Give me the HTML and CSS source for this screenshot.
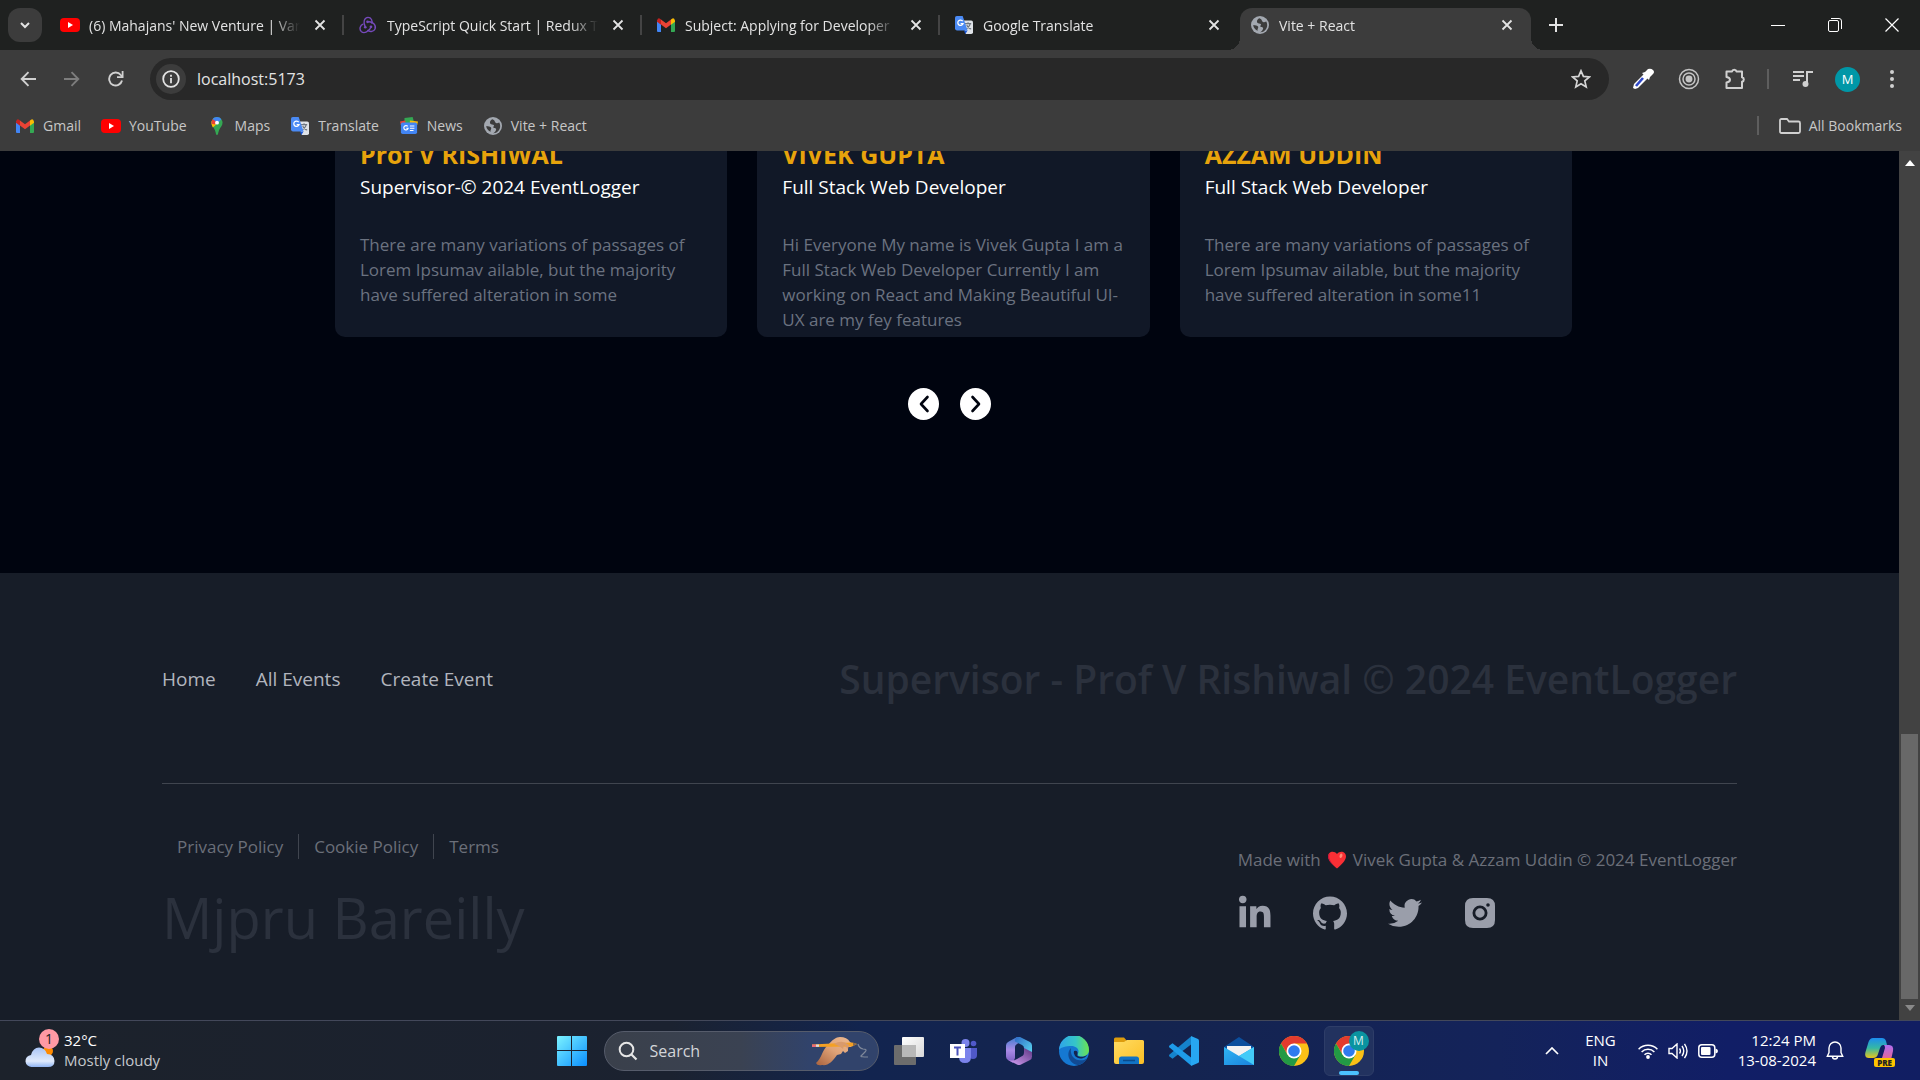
FILE: index.html
```html
<!DOCTYPE html>
<html lang="en">
<head>
<meta charset="utf-8">
<meta name="viewport" content="width=device-width, initial-scale=1">
<title>Vite + React</title>
<link rel="stylesheet" href="styles.css">
</head>
<body>
<svg class="sprite" width="0" height="0" aria-hidden="true">
  <defs>
    <linearGradient id="g-win" x1="0" y1="0" x2="1" y2="1"><stop offset="0" stop-color="#7cf3ff"/><stop offset="1" stop-color="#0a8fff"/></linearGradient>
    <linearGradient id="g-cloud" x1="0" y1="0" x2="0" y2="1"><stop offset="0" stop-color="#a9c4f5"/><stop offset=".7" stop-color="#dfeafc"/><stop offset="1" stop-color="#8fb4f2"/></linearGradient>
    <linearGradient id="g-skin" x1="0" y1="1" x2="1" y2="0"><stop offset="0" stop-color="#a8623e"/><stop offset=".5" stop-color="#e0a377"/><stop offset="1" stop-color="#edba92"/></linearGradient>
    <linearGradient id="g-o1" x1="0" y1="0" x2="1" y2="1"><stop offset="0" stop-color="#2d66c4"/><stop offset="1" stop-color="#5fe3f5"/></linearGradient>
    <linearGradient id="g-o2" x1="0" y1="0" x2="0" y2="1"><stop offset="0" stop-color="#3f7ccf"/><stop offset=".5" stop-color="#a98be6"/><stop offset="1" stop-color="#7a5bc0"/></linearGradient>
    <linearGradient id="g-o3" x1="0" y1="1" x2="1" y2="0"><stop offset="0" stop-color="#d9a4f7"/><stop offset="1" stop-color="#5b3583"/></linearGradient>
    <linearGradient id="g-edge" x1="0" y1="0" x2="1" y2="0"><stop offset="0" stop-color="#2fa4ea"/><stop offset=".55" stop-color="#35c5c8"/><stop offset="1" stop-color="#6be34f"/></linearGradient>
    <linearGradient id="g-folder" x1="0" y1="0" x2="1" y2="1"><stop offset="0" stop-color="#ffdc63"/><stop offset="1" stop-color="#fcbf24"/></linearGradient>
    <linearGradient id="g-mail" x1="0" y1="0" x2="1" y2="1"><stop offset="0" stop-color="#2fb4f3"/><stop offset="1" stop-color="#1a82dc"/></linearGradient>
    <linearGradient id="g-cop1" x1="0" y1="0" x2="0" y2="1"><stop offset="0" stop-color="#1c8cf0"/><stop offset=".5" stop-color="#35b8a4"/><stop offset="1" stop-color="#e8c61c"/></linearGradient>
    <linearGradient id="g-cop2" x1="0" y1="0" x2="0" y2="1"><stop offset="0" stop-color="#b06cf0"/><stop offset="1" stop-color="#f4667c"/></linearGradient>
    <linearGradient id="g-tv" x1="0" y1="0" x2="1" y2="1"><stop offset="0" stop-color="#fff"/><stop offset="1" stop-color="#d8d8d8"/></linearGradient>
  </defs>
  <symbol id="i-yt" viewBox="0 0 20 16"><rect y="1" width="20" height="14" rx="4" fill="#f00"/><path d="M8 5l5 3-5 3z" fill="#fff"/></symbol>
  <symbol id="i-gmail" viewBox="0 0 20 16"><path d="M1 3v11q0 1 1 1h3V7z" fill="#4285f4"/><path d="M19 3v11q0 1-1 1h-3V7z" fill="#34a853"/><path d="M5 2.500v5l5 3.800 5-3.800v-5l-5 3.800z" fill="#ea4335"/><path d="M1 3.500v1.300l4 3V2.500l-1-.8Q2 .5 1 3.500z" fill="#c5221f"/><path d="M19 3.500v1.300l-4 3V2.500l1-.8Q18 .5 19 3.500z" fill="#fbbc04"/></symbol>
  <symbol id="i-tr" viewBox="0 0 20 20"><path d="M8 5h10q2 0 2 2v11q0 2-2 2h-6z" fill="#dfe3e8"/><path d="M11 8.500h7M14.500 7v1.500M17 8.500q-1 4-5 6M13 10q2 4 5 4.500" stroke="#6f7780" stroke-width="1.200" fill="none"/><path d="M10 16h4l-2.500 4z" fill="#1a56d6"/><path d="M2 0h6.500l5.500 16H2q-2 0-2-2V2q0-2 2-2z" fill="#4a8af4"/><path d="M8.600 5.800A3 3 0 1 0 9 8.400H6.300" stroke="#fff" stroke-width="1.400" fill="none"/></symbol>
  <symbol id="i-redux" viewBox="0 0 20 20"><g fill="none" stroke="#764abc" stroke-width="1.500"><path d="M7 12C4 7 6 1.500 10 1.500c3.600 0 5.500 4 4 7"/><path d="M9.500 6.500c6-1 10 4 8.300 8-1.500 3.500-6.500 3.500-8.300 1"/><path d="M13.500 12c-2 5.500-8 8-11 5.200C-.2 14.500 1.500 10 4.500 9"/></g><circle cx="9.500" cy="6.500" r="1.500" fill="#764abc"/><circle cx="7" cy="12.500" r="1.500" fill="#764abc"/><circle cx="13.300" cy="12" r="1.500" fill="#764abc"/></symbol>
  <symbol id="i-globe" viewBox="0 0 20 20"><circle cx="10" cy="10" r="10" fill="#a3a8b0"/><path d="M9 2.500C7 4 6 5.500 7 7.500c1 1 3 .5 4 1.500.5 1-1 2-.5 3 1 1 3 0 3 1.500 0 2-2 4-3.500 4.500 4.500.3 8-3.500 8-8 0-1.500-.4-2.800-1-4-1.500.3-3 1.500-4 .5S12 3 9 2.500z" fill="#3c3c3c"/><path d="M2.500 10c2 .2 5 .5 5.500 2s-1.500 3-.5 4.500C5 15.500 2.500 13 2.500 10z" fill="#3c3c3c"/></symbol>
  <symbol id="i-maps" viewBox="0 0 16 24"><path d="M8 0a7.500 7.500 0 0 0-7 10c1 3 4.500 6 5.300 11 .3 2 .7 3 1.700 3s1.400-1 1.700-3C10.500 16 14 13 15 10A7.500 7.500 0 0 0 8 0z" fill="#34a853"/><path d="M1 5l6 5-4.500 4C1 11.500 0 8 1 5z" fill="#fbbc04"/><path d="M2.300 2.800A8 8 0 0 0 .6 9l4.800 1 3-4z" fill="#ea4335"/><path d="M2.300 2.800C5-.7 11-.8 13.700 3L9.500 8 6 5.500z" fill="#4285f4"/><circle cx="8" cy="7.500" r="2.600" fill="#fff"/></symbol>
  <symbol id="i-news" viewBox="0 0 20 20"><path d="M5 1l9-1 2 7H5z" fill="#34a853"/><path d="M0 5l6-1v5H1z" fill="#ea4335"/><path d="M20 5l-9-1v5h8z" fill="#fbbc04"/><rect x="1" y="6" width="18" height="13" rx="2" fill="#4285f4"/><path d="M8.600 10.500a2.400 2.400 0 1 0 .4 2H7M11 10h5M11 12.500h5M11 15h4" stroke="#fff" stroke-width="1.300" fill="none"/></symbol>
  <symbol id="i-x" viewBox="0 0 12 12"><path d="M1.500 1.500l9 9M10.500 1.500l-9 9" stroke="currentColor" stroke-width="1.800"/></symbol>
  <symbol id="i-chrome" viewBox="0 0 30 30"><circle cx="15" cy="15" r="15" fill="#fbc116"/><path d="M2 7.500A15 15 0 0 1 28 7.500H15L9 19z" fill="#e33b2e"/><path d="M2 7.500A15 15 0 0 0 15 30l6.500-11.300L8.500 18.700z" fill="#229a45"/><circle cx="15" cy="15" r="7.500" fill="#fff"/><circle cx="15" cy="15" r="5.800" fill="#2f7bee"/></symbol>
</svg>

<header class="browser">
  <div class="tabstrip">
    <button class="tab-search" aria-label="Search tabs"><svg width="12" height="12" viewBox="0 0 12 12"><path d="M2 4l4 4 4-4" fill="none" stroke="#e3e3e3" stroke-width="2"/></svg></button>
    <div class="tab"><svg class="fav"><use href="#i-yt"/></svg><span class="tab-title">(6) Mahajans' New Venture | Var</span><button class="tab-close" aria-label="Close tab"><svg width="12" height="12"><use href="#i-x"/></svg></button></div>
    <div class="tab"><svg class="fav"><use href="#i-redux"/></svg><span class="tab-title">TypeScript Quick Start | Redux To</span><button class="tab-close" aria-label="Close tab"><svg width="12" height="12"><use href="#i-x"/></svg></button></div>
    <div class="tab"><svg class="fav"><use href="#i-gmail"/></svg><span class="tab-title">Subject: Applying for Developer</span><button class="tab-close" aria-label="Close tab"><svg width="12" height="12"><use href="#i-x"/></svg></button></div>
    <div class="tab tab-last"><svg class="fav"><use href="#i-tr"/></svg><span class="tab-title">Google Translate</span><button class="tab-close" aria-label="Close tab"><svg width="12" height="12"><use href="#i-x"/></svg></button></div>
    <div class="tab tab-active"><svg class="fav"><use href="#i-globe"/></svg><span class="tab-title">Vite + React</span><button class="tab-close" aria-label="Close tab"><svg width="12" height="12"><use href="#i-x"/></svg></button></div>
    <button class="new-tab" aria-label="New tab"><svg width="14" height="14" viewBox="0 0 14 14"><path d="M7 0v14M0 7h14" stroke="#e3e3e3" stroke-width="2"/></svg></button>
    <div class="win-buttons">
      <button aria-label="Minimize"><svg width="14" height="14" viewBox="0 0 14 14"><path d="M0 7.500h14" stroke="#fff"/></svg></button>
      <button aria-label="Restore"><svg width="14" height="14" viewBox="0 0 14 14"><rect x=".5" y="2.500" width="10" height="11" rx="1.500" fill="none" stroke="#fff"/><path d="M3 .5h8q2.500 0 2.500 2.500v8" fill="none" stroke="#fff"/></svg></button>
      <button aria-label="Close"><svg width="14" height="14" viewBox="0 0 14 14"><path d="M.5.500l13 13M13.500.500l-13 13" stroke="#fff" stroke-width="1.200"/></svg></button>
    </div>
  </div>

  <div class="toolbar">
    <div class="nav-buttons">
      <button aria-label="Back"><svg width="16" height="16" viewBox="0 0 16 16"><path d="M16 8H2M8.500 1.200L1.700 8l6.800 6.800" fill="none" stroke="#d0d0d0" stroke-width="1.900"/></svg></button>
      <button aria-label="Forward"><svg width="16" height="16" viewBox="0 0 16 16"><path d="M0 8h14M7.500 1.200L14.300 8l-6.800 6.800" fill="none" stroke="#7d7d7d" stroke-width="1.900"/></svg></button>
      <button aria-label="Reload"><svg width="16" height="16" viewBox="0 0 16 16"><path d="M14 9.500A6.500 6.500 0 1 1 12.800 4L14.500 6" fill="none" stroke="#d0d0d0" stroke-width="1.900"/><path d="M15.500 0v7H9V5.200h4.700V0z" fill="#d0d0d0"/></svg></button>
    </div>
    <div class="omnibox">
      <button class="site-info" aria-label="Site information"><svg width="18" height="18" viewBox="0 0 18 18"><circle cx="9" cy="9" r="7.800" fill="none" stroke="#e3e3e3" stroke-width="1.800"/><path d="M9 8v5.300M9 4.700v2" stroke="#e3e3e3" stroke-width="1.800"/></svg></button>
      <input class="url" type="text" aria-label="Address" value="localhost:5173">
      <button class="star" aria-label="Bookmark this tab"><svg width="20" height="20" viewBox="0 0 20 20"><path d="M10 1.800l2.400 5.600 6 .5-4.600 4 1.400 6-5.200-3.200-5.200 3.200 1.400-6-4.600-4 6-.5z" fill="none" stroke="#d5d5d5" stroke-width="1.700"/></svg></button>
    </div>
    <div class="tools">
      <button aria-label="Color picker"><svg width="22" height="22" viewBox="0 0 22 22"><path d="M3 21l-2-1 1-4L12 6l4 4L6 20z" fill="#fff"/><path d="M4 18l7-8" stroke="#3049c8" stroke-width="2.600"/><path d="M10 5l3-1 3-3q3-1 5 1t0 4l-3 3-1 3z" fill="#fff"/></svg></button>
      <button aria-label="Target"><svg width="22" height="22" viewBox="0 0 22 22" fill="none" stroke="#c4c4c4" stroke-width="1.500"><circle cx="11" cy="11" r="9.500"/><circle cx="11" cy="11" r="6"/><circle cx="11" cy="11" r="2.700" fill="#c4c4c4"/></svg></button>
      <button aria-label="Extensions"><svg width="22" height="22" viewBox="0 0 22 22"><path d="M2.500 3.500H8a2.300 2.300 0 0 1 4.500 0h5.500v5.700a2.300 2.300 0 0 1 0 4.500v6.300H2.500v-5.500q3.500-.5 3.500-2.700T2.500 9z" fill="none" stroke="#d0d0d0" stroke-width="2" stroke-linejoin="round"/></svg></button>
      <span class="tool-divider"></span>
      <button aria-label="Media"><svg width="20" height="18" viewBox="0 0 20 18"><path d="M0 2h11M0 6h11M0 10h7" stroke="#d0d0d0" stroke-width="1.800"/><path d="M14 14V2h6" fill="none" stroke="#d0d0d0" stroke-width="2"/><circle cx="12.500" cy="14" r="3" fill="#d0d0d0"/></svg></button>
      <button class="avatar" aria-label="Profile">M</button>
      <button aria-label="Menu"><svg width="6" height="18" viewBox="0 0 6 18" fill="#d0d0d0"><circle cx="3" cy="2" r="2"/><circle cx="3" cy="9" r="2"/><circle cx="3" cy="16" r="2"/></svg></button>
    </div>
  </div>

  <nav class="bookmarks" aria-label="Bookmarks">
    <a href="#gmail"><svg class="fav"><use href="#i-gmail"/></svg>Gmail</a>
    <a href="#youtube"><svg class="fav"><use href="#i-yt"/></svg>YouTube</a>
    <a href="#maps"><svg class="fav"><use href="#i-maps"/></svg>Maps</a>
    <a href="#translate"><svg class="fav"><use href="#i-tr"/></svg>Translate</a>
    <a href="#news"><svg class="fav"><use href="#i-news"/></svg>News</a>
    <a href="#vite"><svg class="fav"><use href="#i-globe"/></svg>Vite + React</a>
    <a class="all-bookmarks" href="#all"><svg width="22" height="16" viewBox="0 0 22 16"><path d="M1 2.500Q1 1 2.500 1H8l2 2.500h9.500Q21 3.500 21 5v8.500q0 1.500-1.500 1.500h-17Q1 15 1 13.500z" fill="none" stroke="#d0d0d0" stroke-width="1.800"/></svg>All Bookmarks</a>
  </nav>
</header>

<div class="viewport">
  <div class="page">
    <main class="team">
      <div class="cards">
        <article class="card"><h2>Prof V RISHIWAL</h2><h3>Supervisor-© 2024 EventLogger</h3><p>There are many variations of passages of Lorem Ipsumav ailable, but the majority have suffered alteration in some</p></article>
        <article class="card"><h2>VIVEK GUPTA</h2><h3>Full Stack Web Developer</h3><p>Hi Everyone My name is Vivek Gupta I am a Full Stack Web Developer Currently I am working on React and Making Beautiful UI-UX are my fey features</p></article>
        <article class="card"><h2>AZZAM UDDIN</h2><h3>Full Stack Web Developer</h3><p>There are many variations of passages of Lorem Ipsumav ailable, but the majority have suffered alteration in some11</p></article>
      </div>
      <div class="pager">
        <button aria-label="Previous"><svg width="12" height="18" viewBox="0 0 12 18"><path d="M9.500 2L3 9l6.500 7" fill="none" stroke="#00040f" stroke-width="2.600" stroke-linecap="round" stroke-linejoin="round"/></svg></button>
        <button aria-label="Next"><svg width="12" height="18" viewBox="0 0 12 18"><path d="M2.500 2L9 9l-6.500 7" fill="none" stroke="#00040f" stroke-width="2.600" stroke-linecap="round" stroke-linejoin="round"/></svg></button>
      </div>
    </main>
    <footer class="footer">
      <div class="footer-top">
        <nav class="footer-nav"><a href="#home">Home</a><a href="#events">All Events</a><a href="#create">Create Event</a></nav>
        <p class="supervisor">Supervisor - Prof V Rishiwal © 2024 EventLogger</p>
      </div>
      <div class="footer-bottom">
        <div class="footer-left">
          <nav class="legal"><a href="#privacy">Privacy Policy</a><a href="#cookies">Cookie Policy</a><a href="#terms">Terms</a></nav>
          <p class="place">Mjpru Bareilly</p>
        </div>
        <div class="footer-right">
          <p class="made">Made with <svg width="18" height="18" viewBox="0 0 18 18"><path d="M9 17.500C5 14 0 9.500 0 5.500 0 .5 6-1 9 3c3-4 9-2.500 9 2.500 0 4-5 8.500-9 12z" fill="#f92f35"/><path d="M2 2.500C-1 7 4 13 9 17.500 5 14 0 9.500 0 5.500 0 4 1 3 2 2.500z" fill="#c8123f"/><ellipse cx="13" cy="4.800" rx="1.400" ry="2.300" transform="rotate(20 13 4.800)" fill="#ff8a75"/></svg> Vivek Gupta &amp; Azzam Uddin © 2024 EventLogger</p>
          <div class="social">
            <a href="#linkedin" aria-label="LinkedIn"><svg width="34" height="36" viewBox="-7 -10 470 512"><path d="M100.280 448H7.400V148.900h92.880zM53.790 108.100C24.090 108.100 0 83.500 0 53.800a53.790 53.790 0 0 1 107.580 0c0 29.700-24.100 54.300-53.790 54.300zM447.900 448h-92.680V302.400c0-34.700-.7-79.200-48.290-79.200-48.290 0-55.690 37.700-55.690 76.700V448h-92.780V148.900h89.080v40.800h1.300c12.400-23.500 42.690-48.300 87.880-48.300 94 0 111.280 61.900 111.280 142.300V448z"/></svg></a>
            <a href="#github" aria-label="GitHub"><svg width="34" height="34" viewBox="0 0 24 24"><path d="M12 .297c-6.630 0-12 5.373-12 12 0 5.303 3.438 9.800 8.205 11.385.6.113.82-.258.82-.577 0-.285-.01-1.040-.015-2.040-3.338.724-4.042-1.610-4.042-1.610C4.422 18.070 3.633 17.700 3.633 17.700c-1.087-.744.084-.729.084-.729 1.205.084 1.838 1.236 1.838 1.236 1.070 1.835 2.809 1.305 3.495.998.108-.776.417-1.305.76-1.605-2.665-.3-5.466-1.332-5.466-5.930 0-1.310.465-2.380 1.235-3.220-.135-.303-.54-1.523.105-3.176 0 0 1.005-.322 3.300 1.230.96-.267 1.980-.399 3-.405 1.020.006 2.040.138 3 .405 2.280-1.552 3.285-1.230 3.285-1.230.645 1.653.24 2.873.12 3.176.765.84 1.230 1.910 1.230 3.220 0 4.610-2.805 5.625-5.475 5.920.42.36.81 1.096.81 2.220 0 1.606-.015 2.896-.015 3.286 0 .315.21.69.825.57C20.565 22.092 24 17.592 24 12.297c0-6.627-5.373-12-12-12"/></svg></a>
            <a href="#twitter" aria-label="Twitter"><svg width="34" height="34" viewBox="0 0 24 24"><path d="M23.953 4.570a10 10 0 01-2.825.775 4.958 4.958 0 002.163-2.723c-.951.555-2.005.959-3.127 1.184a4.920 4.920 0 00-8.384 4.482C7.690 8.095 4.067 6.130 1.640 3.162a4.822 4.822 0 00-.666 2.475c0 1.710.87 3.213 2.188 4.096a4.904 4.904 0 01-2.228-.616v.06a4.923 4.923 0 003.946 4.827 4.996 4.996 0 01-2.212.085 4.936 4.936 0 004.604 3.417 9.867 9.867 0 01-6.102 2.105c-.39 0-.779-.023-1.170-.067a13.995 13.995 0 007.557 2.209c9.053 0 13.998-7.496 13.998-13.985 0-.21 0-.42-.015-.63A9.935 9.935 0 0024 4.590z"/></svg></a>
            <a href="#instagram" aria-label="Instagram"><svg width="34" height="34" viewBox="0 0 34 34"><path fill-rule="evenodd" d="M10 2h14q8 0 8 8v14q0 8-8 8H10q-8 0-8-8V10q0-8 8-8zM17 9.500a7.500 7.500 0 1 0 0 15 7.500 7.500 0 0 0 0-15zM17 12.300a4.700 4.700 0 1 1 0 9.400 4.700 4.700 0 0 1 0-9.400zM25 7.200a1.800 1.800 0 1 0 0 3.600 1.800 1.800 0 0 0 0-3.600z"/></svg></a>
          </div>
        </div>
      </div>
    </footer>
  </div>
  <div class="scrollbar" aria-hidden="true">
    <svg width="10" height="6" viewBox="0 0 10 6"><path d="M0 6l5-6 5 6z" fill="#fff"/></svg>
    <div class="scroll-track"><div class="scroll-thumb"></div></div>
    <svg width="10" height="6" viewBox="0 0 10 6"><path d="M0 0l5 6 5-6z" fill="#8a8a8a"/></svg>
  </div>
</div>

<div class="taskbar">
  <button class="weather">
    <span class="weather-icon"><svg width="30" height="22" viewBox="0 0 30 22"><circle cx="23" cy="5" r="5" fill="#ff8a00"/><path d="M7 21a6 6 0 0 1-1-12Q8 1.500 14 1.500T22 8q7 0 7.500 7 0 6-6.500 6z" fill="url(#g-cloud)"/></svg><span class="badge">1</span></span>
    <span class="weather-text"><span>32°C</span><span class="muted">Mostly cloudy</span></span>
  </button>
  <div class="apps">
    <button class="app" aria-label="Start"><svg width="30" height="30" viewBox="0 0 30 30"><path d="M1 0h13v14H0V1q0-1 1-1zM15 0h14q1 0 1 1v13H15zM0 15h14v15H1q-1 0-1-1zM15 15h15v14q0 1-1 1H15z" fill="url(#g-win)"/></svg></button>
    <label class="search">
      <svg width="20" height="20" viewBox="0 0 20 20"><circle cx="8.500" cy="8.500" r="6.800" fill="none" stroke="#e6e6e6" stroke-width="2"/><path d="M13.500 13.500L18.500 18.500" stroke="#e6e6e6" stroke-width="2.200"/></svg>
      <input type="search" placeholder="Search" aria-label="Search">
      <svg width="58" height="30" viewBox="0 0 58 30"><path d="M4 27C10 22 10 14 16 9 20 4 24 1 28 1q7 0 10 5l3 2-2 3-3 0 0 4-3 2-2-2-2 3-4 1C20 26 16 30 10 29Q5 30 4 27z" fill="url(#g-skin)"/><path d="M0 8.500L40 6.500l5 1.500-5 2.500L0 11z" fill="#f4a024"/><path d="M0 8.500h4V11H0z" fill="#e86a76"/><path d="M4 8.500h3v2.300H4z" fill="#d8dde4"/><path d="M41 6.500l4 1.500-4 2z" fill="#8a6a4a"/><path d="M22 8q8-5 15 1l-1 4-4-4-1 4-4-3z" fill="#d99a6c"/><path d="M46 8q1 4 5 5 5 0 2 3t-4 4 7 1" fill="none" stroke="#7f889a" stroke-width="1.200"/></svg>
    </label>
    <button class="app" aria-label="Task view"><svg width="30" height="28" viewBox="0 0 30 28"><rect x="0" y="8" width="22" height="20" rx="1" fill="#6c6c6c"/><rect x="8" y="0" width="22" height="20" rx="1" fill="url(#g-tv)"/><path d="M8 8h14v12H8z" fill="#b8b8b8"/></svg></button>
    <button class="app" aria-label="Teams"><svg width="28" height="24" viewBox="0 0 28 24"><circle cx="15.500" cy="4" r="4" fill="#7b83eb"/><circle cx="23.500" cy="4.500" r="2.800" fill="#5059c9"/><path d="M19 9h8v7q0 4-4 4t-4-4z" fill="#5059c9"/><path d="M9 9h12v9q0 6-6 6t-6-6z" fill="#7b83eb"/><rect x="0" y="5" width="15" height="14" fill="#fff"/><path d="M4 8.500h7M7.500 8.500v8" stroke="#4b53bc" stroke-width="2"/></svg></button>
    <button class="app" aria-label="Microsoft 365"><svg width="26" height="28" viewBox="0 0 26 28"><path d="M11 0L2 5Q0 6 0 8.500v11q0 2 2 3.500l5 3 2-5V10q0-2 2-3l3-2z" fill="url(#g-o2)"/><path d="M11 0q2-1 4 .5L24 5q2 1 2 3.500V20l-8-4v-5q0-2-2-3l-7-3.500q-.5-3 2-4.500z" fill="url(#g-o1)"/><path d="M26 15v4.500q0 2.500-2 3.500l-9 4.500q-2 1-4 0l-9-4.500q5 1.500 9-1l6-3.500q1-1 1-3V11z" fill="url(#g-o3)"/></svg></button>
    <button class="app" aria-label="Edge"><svg width="30" height="30" viewBox="0 0 30 30"><circle cx="15" cy="15" r="15" fill="#1578d2"/><path d="M0 14A15 15 0 0 1 30 14c0 4-3 6.500-7 6.500-3 0-5-1-4-3 2-4-2-7.500-6.500-7.500C7 10 2 11 0 14z" fill="url(#g-edge)"/><path d="M12 12c-6 6-1 17 8 17 3-1 6-3 8-6.500-3 2-6 2-9 1.500-5-1-8-6-7-12z" fill="#114a93"/><path d="M18.500 18c-1 2 1 3 4 2.700 2 0 4-.5 5.500-2C27 22 20 24.500 16 20q-2-3-1-5 4-1 3.500 3z" fill="#132550"/></svg></button>
    <button class="app" aria-label="File Explorer"><svg width="30" height="27" viewBox="0 0 30 27"><path d="M0 2q0-1.500 1.500-1.500H10L13 4h15q2 0 2 2v5H0z" fill="#dd9c0d"/><path d="M0 5h10l3-2h15.500Q30 3 30 4.500V25q0 2-2 2H2q-2 0-2-2z" fill="url(#g-folder)"/><path d="M5 27v-5q0-2.500 2.500-2.500h15q2.500 0 2.500 2.500v5z" fill="#1273c4"/><path d="M9 23.500h12" stroke="#0a4b8c" stroke-width="1.500"/></svg></button>
    <button class="app" aria-label="Visual Studio Code"><svg width="30" height="30" viewBox="0 0 30 30"><path d="M22 8.500L3.500 22.800.5 20.500q-1-1 0-2L22 .500z" fill="#1583cc"/><path d="M22 21.500L3.500 7.200.5 9.500q-1 1 0 2L22 29.500z" fill="#1e9be9"/><path d="M22 0l7 3q1 .5 1 1.500v21q0 1-1 1.500l-7 3z" fill="#27a7f2"/></svg></button>
    <button class="app" aria-label="Mail"><svg width="30" height="28" viewBox="0 0 30 28"><path d="M0 10L15 0l15 10v6H0z" fill="#0b4f9e"/><path d="M3 9h24v10H3z" fill="#f2f2f2"/><path d="M0 10l15 9 15-9v18H0z" fill="url(#g-mail)"/><path d="M30 10v18L15 19z" fill="#43cbf8"/></svg></button>
    <button class="app" aria-label="Chrome"><svg width="30" height="30"><use href="#i-chrome"/></svg></button>
    <button class="app app-active" aria-label="Chrome, profile M"><svg width="30" height="30"><use href="#i-chrome"/></svg><span class="app-badge">M</span></button>
  </div>
  <div class="tray">
    <button aria-label="Show hidden icons"><svg width="14" height="8" viewBox="0 0 14 8"><path d="M1 7l6-6 6 6" fill="none" stroke="#fff" stroke-width="1.700"/></svg></button>
    <button class="lang"><span>ENG</span><span>IN</span></button>
    <button class="status" aria-label="Network, volume and battery">
      <svg width="20" height="16" viewBox="0 0 20 16"><g fill="none" stroke="#fff" stroke-width="1.500"><path d="M.6 6.200a13.300 13.300 0 0 1 18.800 0M3.600 9a9 9 0 0 1 12.800 0M6.500 11.800a5 5 0 0 1 7 0"/></g><circle cx="10" cy="14" r="1.900" fill="#fff"/></svg>
      <svg width="20" height="16" viewBox="0 0 20 16" fill="none" stroke="#fff" stroke-width="1.400"><path d="M1 5.500h3L9 1v14l-5-4.500H1zM11.500 5.500q1.800 2.500 0 5M14 3q3.500 5 0 10M16.500 .8q5 7.200 0 14.400"/></svg>
      <svg width="20" height="14" viewBox="0 0 20 14"><rect x=".8" y=".8" width="16" height="12.400" rx="3" fill="none" stroke="#fff" stroke-width="1.500"/><rect x="3" y="3" width="9.500" height="8" rx="1" fill="#fff"/><path d="M17.500 4.500q2.500.5 2.500 2.500t-2.500 2.500z" fill="#fff"/></svg>
    </button>
    <button class="clock"><span>12:24 PM</span><span>13-08-2024</span></button>
    <button aria-label="Notifications"><svg width="18" height="20" viewBox="0 0 18 20" fill="none" stroke="#fff" stroke-width="1.400"><path d="M9 1a6 6 0 0 0-6 6v4.500L1.300 15.200h15.400L15 11.500V7a6 6 0 0 0-6-6zM6.500 15.500a2.500 2.500 0 0 0 5 0"/></svg></button>
    <button class="copilot" aria-label="Copilot preview"><svg width="30" height="26" viewBox="0 0 30 26"><path d="M8 0h9q3 0 4 3l1 4h-4q-2 0-3 3l-2 6q-1 4-5 4H4q-5 0-3.500-6l3-10Q5 0 8 0z" fill="url(#g-cop1)"/><path d="M19 7h5q5 0 4 6l-2 9q-1 3-5 3h-8q3 0 4-5l3-10q0-2-1-3z" fill="url(#g-cop2)"/></svg><span class="pre">PRE</span></button>
  </div>
</div>
</body>
</html>
```
FILE: styles.css
```css
* { box-sizing: border-box; }

body {
  margin: 0;
  height: 100vh;
  display: flex;
  flex-direction: column;
  overflow: hidden;
  background: #00040f;
  color: #e3e3e3;
  font-family: "Open Sans", "Noto Sans", sans-serif;
  font-size: 15px;
}

h2, h3, p { margin: 0; }
a { color: inherit; text-decoration: none; }
svg { display: block; flex: none; }
.sprite { position: absolute; }

button {
  display: flex;
  align-items: center;
  justify-content: center;
  padding: 0;
  border: 0;
  background: none;
  color: inherit;
  font: inherit;
}

input {
  min-width: 0;
  flex: 1;
  padding: 0;
  border: 0;
  outline: 0;
  background: none;
  color: inherit;
  font: inherit;
}

/* Browser chrome */
.browser { flex: none; background: #3c3c3c; }

.tabstrip {
  display: flex;
  align-items: flex-end;
  height: 50px;
  padding-left: 8px;
  background: #1f2120;
}

.tab-search {
  width: 34px;
  height: 34px;
  margin-bottom: 8px;
  margin-right: 4px;
  border-radius: 12px;
  background: #3c3c3c;
}

.tab {
  position: relative;
  display: flex;
  align-items: center;
  flex: 0 1 298px;
  min-width: 0;
  height: 42px;
  padding: 0 17px 8px 14px;
  gap: 9px;
  font-size: 14px;
}

.tab::after {
  content: "";
  position: absolute;
  right: 0;
  top: 7px;
  width: 2px;
  height: 20px;
  background: #444;
}

.tab-last::after, .tab-active::after { display: none; }
.fav { width: 20px; height: 18px; }

.tab-title {
  flex: 1;
  overflow: hidden;
  white-space: nowrap;
  mask-image: linear-gradient(to right, #000 calc(100% - 28px), transparent);
}

.tab-close { width: 14px; height: 14px; margin-left: 4px; }

.tab-active {
  flex-basis: 291px;
  margin-left: 2px;
  padding-left: 10px;
  border-radius: 12px 12px 0 0;
  background: #3c3c3c;
}

.tab-active::before {
  content: "";
  position: absolute;
  left: -12px;
  right: -12px;
  bottom: 0;
  height: 12px;
  background:
    radial-gradient(circle at 0 0, transparent 12px, #3c3c3c 12px) left / 12px 12px no-repeat,
    radial-gradient(circle at 100% 0, transparent 12px, #3c3c3c 12px) right / 12px 12px no-repeat;
}

.new-tab { width: 50px; height: 34px; margin-bottom: 8px; }
.win-buttons { display: flex; margin-left: auto; }
.win-buttons button { width: 57px; height: 50px; }

.toolbar {
  display: flex;
  align-items: center;
  height: 58px;
  padding: 0 6px;
}

.nav-buttons { display: flex; width: 144px; }
.nav-buttons button { width: 44px; height: 40px; }

.omnibox {
  display: flex;
  align-items: center;
  flex: 1;
  height: 42px;
  padding: 0 18px 0 6px;
  border-radius: 21px;
  background: #282828;
}

.site-info { width: 30px; height: 30px; border-radius: 50%; background: #3c3c3c; }
.url { margin-left: 11px; font-size: 16px; }

.tools { display: flex; align-items: center; gap: 2px; margin-left: 12px; }
.tools button { width: 44px; height: 40px; }
.tool-divider { width: 2px; height: 20px; margin: 0 10px 0 8px; background: #5e5e5e; }

.tools .avatar {
  width: 25px;
  height: 25px;
  margin: 0 8px;
  border-radius: 50%;
  background: #0097a7;
  color: #fff;
  font-size: 13px;
}

.bookmarks {
  display: flex;
  align-items: center;
  height: 43px;
  padding: 0 18px 8px 15px;
  gap: 20px;
  color: #c7c7c7;
  font-size: 14px;
}

.bookmarks a { display: flex; align-items: center; gap: 8px; }

.all-bookmarks {
  margin-left: auto;
  padding-left: 20px;
  border-left: 2px solid #5e5e5e;
}

/* Page */
.viewport { display: flex; flex: 1; min-height: 0; }

.page {
  display: flex;
  flex: 1;
  flex-direction: column;
  justify-content: flex-end;
  overflow: hidden;
}

.team, .footer { flex: none; }
.team { padding-bottom: 153px; }

.cards {
  display: grid;
  grid-template-columns: repeat(3, 1fr);
  gap: 30px;
  padding: 0 327px 0 335px;
}

.card {
  padding: 30px 25px 5px;
  border-radius: 0 0 10px 10px;
  background: #111827;
}

.card h2 { margin-bottom: 2px; color: #e7a30c; font-size: 25px; font-weight: 700; line-height: 32px; }
.card h3 { color: #fff; font-size: 19px; font-weight: 400; line-height: 30px; }
.card p { margin-top: 30px; color: #6b7280; font-size: 17px; line-height: 25px; }

.pager { display: flex; justify-content: center; gap: 21px; margin-top: 51px; }
.pager button { width: 31px; height: 32px; border-radius: 50%; background: #fff; }

.footer { padding: 76px 162px 63px; background: #171d28; }

.footer-top {
  display: flex;
  align-items: center;
  justify-content: space-between;
  padding-bottom: 74px;
  border-bottom: 1px solid #40454f;
}

.footer-nav { display: flex; gap: 40px; color: #b2b5be; font-size: 19px; }

.supervisor {
  color: #2b313d;
  font-size: 39px;
  font-weight: 600;
  line-height: 60px;
  white-space: nowrap;
}

.footer-bottom {
  display: flex;
  align-items: flex-start;
  justify-content: space-between;
  padding-top: 50px;
}

.legal { display: flex; color: #6b6f79; font-size: 17px; line-height: 25px; }
.legal a { padding: 0 15px; }
.legal a + a { border-left: 1px solid #40454f; }
.place { margin-top: 18px; color: #2b313d; font-size: 56px; line-height: 80px; }

.footer-right { padding-top: 13px; }

.made {
  display: flex;
  align-items: center;
  gap: 7px;
  color: #6b6f79;
  font-size: 17px;
  line-height: 26px;
}

.social { display: flex; align-items: center; gap: 41px; margin-top: 22px; fill: #9a9eaa; }

.scrollbar {
  display: flex;
  flex-direction: column;
  align-items: center;
  width: 21px;
  padding: 9px 0;
  gap: 6px;
  background: #424242;
}

.scroll-track { display: flex; flex: 1; align-items: flex-end; }
.scroll-thumb { width: 17px; height: 32%; background: #686868; }

/* Taskbar */
.taskbar {
  display: grid;
  grid-template-columns: 1fr auto 1fr;
  align-items: center;
  flex: none;
  height: 60px;
  border-top: 1px solid #43485a;
  background: linear-gradient(90deg, #1c222b 0, #1b2230 35%, #12244f 45%, #14244f 60%, #14235a 78%, #111e66 90%, #111e62 100%);
  color: #fff;
  line-height: 20px;
}

.weather { justify-self: start; gap: 9px; padding-left: 25px; }
.weather-icon { position: relative; padding-top: 12px; }

.badge {
  position: absolute;
  left: 14px;
  top: -5px;
  width: 20px;
  height: 20px;
  border-radius: 50%;
  background: #ff99a4;
  color: #222;
  font-size: 14px;
  line-height: 20px;
}

.weather-text { display: flex; flex-direction: column; align-items: flex-start; padding-bottom: 2px; }
.muted { color: #c5c8cc; }

.apps { display: flex; align-items: center; }
.app { width: 55px; height: 50px; }

.search {
  display: flex;
  align-items: center;
  width: 275px;
  height: 40px;
  margin: 0 3px 0 4px;
  padding: 0 8px 0 13px;
  gap: 12px;
  border: 1px solid #565c6b;
  border-radius: 20px;
  background: linear-gradient(90deg, #3a404b 0, #3a4252 50%, #31436b 75%);
  font-size: 16px;
}

.search input::placeholder { color: #d3d5d9; opacity: 1; }

.app-active {
  position: relative;
  width: 50px;
  margin: 0 2px;
  border: 1px solid #2e3d68;
  border-radius: 6px;
  background: #22325f;
}

.app-active::after {
  content: "";
  position: absolute;
  left: 14px;
  bottom: 0;
  width: 20px;
  height: 4px;
  border-radius: 2px;
  background: #4cc2ff;
}

.app-badge {
  position: absolute;
  right: 4px;
  top: 4px;
  width: 20px;
  height: 20px;
  border-radius: 50%;
  background: #0a93a0;
  color: #d5eef0;
  font-size: 12px;
  line-height: 20px;
}

.tray { display: flex; align-items: center; justify-self: end; padding-right: 25px; }
.lang { flex-direction: column; margin: 0 22px 0 26px; padding-bottom: 2px; }
.status { gap: 10px; }
.clock { flex-direction: column; align-items: flex-end; margin: 0 10px 0 20px; padding-bottom: 2px; }
.copilot { position: relative; margin-left: 21px; }

.pre {
  position: absolute;
  right: 0;
  bottom: -3px;
  padding: 0 3px;
  border-radius: 2px;
  background: #ffc400;
  color: #222;
  font-size: 8px;
  font-weight: 800;
  line-height: 9px;
}
```
